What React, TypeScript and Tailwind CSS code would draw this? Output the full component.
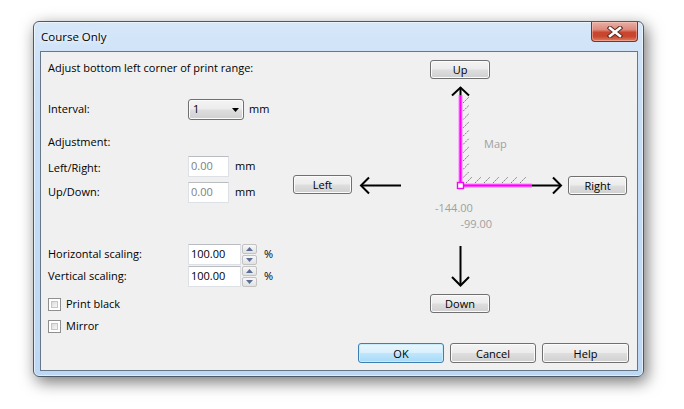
import React from "react";

const btnFace =
  "border border-[#707070] rounded-[3px] bg-[linear-gradient(to_bottom,#f4f4f4_0%,#ececec_48%,#dedede_52%,#d0d0d0_100%)] shadow-[inset_0_0_0_1px_#fbfbfb]";

function Btn({
  children,
  className = "",
  primary = false,
}: {
  children: React.ReactNode;
  className?: string;
  primary?: boolean;
}) {
  const face = primary
    ? "border border-[#3c7fb1] rounded-[3px] bg-[linear-gradient(to_bottom,#eaf6fd_0%,#d9f0fc_48%,#bee6fd_52%,#a7d9f5_100%)] shadow-[inset_0_0_0_1px_#c8ecfd]"
    : btnFace;
  return (
    <div
      className={`${face} h-[19px] flex items-center justify-center text-[11px] text-black leading-none shrink-0 ${className}`}
    >
      {children}
    </div>
  );
}

function TextBox({
  value,
  muted = false,
  className = "",
}: {
  value: string;
  muted?: boolean;
  className?: string;
}) {
  return (
    <div
      className={`h-[21px] bg-white border border-[#dde1e6] border-t-[#b9bcc1] flex items-center pl-[2px] text-[11px] shrink-0 ${
        muted ? "text-[#808080]" : "text-black"
      } ${className}`}
    >
      {value}
    </div>
  );
}

function SpinArrow({ up }: { up: boolean }) {
  return (
    <div className="h-[10px] w-[15px] rounded-[2px] border border-[#c3c3c3] bg-[linear-gradient(to_bottom,#f7f7f7,#e2e2e2)] flex items-center justify-center">
      <svg width="7" height="4" viewBox="0 0 7 4">
        {up ? (
          <path d="M0 4 L3.5 0 L7 4 Z" fill="#5b6f95" />
        ) : (
          <path d="M0 0 L3.5 4 L7 0 Z" fill="#5b6f95" />
        )}
      </svg>
    </div>
  );
}

function Spinner() {
  return (
    <div className="flex flex-col gap-[1px] ml-[1px] shrink-0">
      <SpinArrow up />
      <SpinArrow up={false} />
    </div>
  );
}

function CheckBox({ label }: { label: string }) {
  return (
    <div className="h-[15px] flex items-center gap-[5px]">
      <div className="w-[13px] h-[13px] border border-[#8f8f8f] bg-white p-[2px]">
        <div className="w-full h-full border border-[#c5c5c5] bg-[linear-gradient(135deg,#dadada,#f8f8f8)]" />
      </div>
      <span className="text-[11px] text-black">{label}</span>
    </div>
  );
}

function Dropdown() {
  return (
    <div
      className={`${btnFace} w-[56px] h-[21px] flex items-center justify-between pl-[4px] pr-[4px] text-[11px] text-black shrink-0`}
    >
      <span>1</span>
      <svg width="7" height="4" viewBox="0 0 7 4">
        <path d="M0 0 L7 0 L3.5 4 Z" fill="#000" />
      </svg>
    </div>
  );
}

function CloseButton() {
  return (
    <div className="w-[47px] h-[20px] rounded-b-[4px] border border-t-0 border-[#7a3328] bg-[linear-gradient(to_bottom,#eab0a6_0%,#dc8a7c_40%,#c9452f_55%,#c8452e_75%,#dd7e63_100%)] shadow-[inset_0_0_0_1px_rgba(255,210,200,0.45)] flex items-center justify-center self-start">
      <svg width="16" height="12" viewBox="0 0 16 12">
        <path
          d="M3 2 L13 10 M13 2 L3 10"
          stroke="#5a2a24"
          strokeWidth="4.6"
          strokeLinecap="square"
        />
        <path
          d="M3 2 L13 10 M13 2 L3 10"
          stroke="#ffffff"
          strokeWidth="2.6"
          strokeLinecap="square"
        />
      </svg>
    </div>
  );
}

// Diagram of the print range corner with the move arrows
function CornerDiagram() {
  const vHatch = [] as number[];
  for (let y = 17; y <= 98; y += 8.3) vHatch.push(y);
  const hHatch = [] as number[];
  for (let x = 110; x <= 172; x += 9) hHatch.push(x);
  return (
    <svg
      width="212"
      height="212"
      viewBox="0 0 212 212"
      className="ml-[4px] shrink-0"
      fontFamily="'Open Sans', 'Liberation Sans', sans-serif"
    >
      {/* hatch along the vertical edge */}
      {vHatch.map((y) => (
        <line
          key={`v${y}`}
          x1="107"
          y1={y + 6}
          x2="113"
          y2={y}
          stroke="#7a7a7a"
          strokeWidth="1"
          strokeDasharray="2 1"
        />
      ))}
      {/* hatch along the horizontal edge */}
      {hHatch.map((x) => (
        <line
          key={`h${x}`}
          x1={x}
          y1="103"
          x2={x + 6}
          y2="97"
          stroke="#7a7a7a"
          strokeWidth="1"
          strokeDasharray="2 1"
        />
      ))}

      {/* up arrow */}
      <line x1="104.5" y1="7.5" x2="104.5" y2="16" stroke="#000" strokeWidth="2" />
      <path d="M96 15.5 L104.5 7.5 L113 15.5" stroke="#000" strokeWidth="2" fill="none" />

      {/* magenta edges */}
      <line x1="104.5" y1="15" x2="104.5" y2="105.5" stroke="#ff80ff" strokeWidth="4" />
      <line x1="104" y1="105.5" x2="176" y2="105.5" stroke="#ff80ff" strokeWidth="4" />
      <line x1="104.5" y1="15" x2="104.5" y2="105.5" stroke="#ff00ff" strokeWidth="2" />
      <line x1="104" y1="105.5" x2="176" y2="105.5" stroke="#ff00ff" strokeWidth="2" />
      <rect x="101.5" y="102.5" width="6" height="6" fill="#fff" stroke="#ff00ff" strokeWidth="1.4" />

      {/* right arrow */}
      <line x1="176" y1="105.5" x2="205" y2="105.5" stroke="#000" strokeWidth="2" />
      <path d="M197 97.5 L205 105.5 L197 113.5" stroke="#000" strokeWidth="2" fill="none" />

      {/* left arrow */}
      <line x1="5" y1="105.5" x2="45" y2="105.5" stroke="#000" strokeWidth="2" />
      <path d="M13 97.5 L5 105.5 L13 113.5" stroke="#000" strokeWidth="2" fill="none" />

      {/* down arrow */}
      <line x1="104.5" y1="166" x2="104.5" y2="205" stroke="#000" strokeWidth="2" />
      <path d="M96 197 L104.5 205.5 L113 197" stroke="#000" strokeWidth="2" fill="none" />

      <text x="128" y="68" fontSize="11" fill="#a0a0a0">
        Map
      </text>
      <text x="79" y="132" fontSize="11" fill="#a0a0a0">
        -144.00
      </text>
      <text x="104.5" y="147.5" fontSize="11" fill="#a0a0a0">
        -99.00
      </text>
    </svg>
  );
}

export default function App() {
  return (
    <div className="w-[684px] h-[409px] bg-white pl-[33px] pt-[21px] font-['Open_Sans','Liberation_Sans',sans-serif] text-[11px] text-black overflow-hidden">
      {/* dialog window */}
      <div className="w-[611px] h-[356px] rounded-[6px] border border-[#4f5966] bg-[linear-gradient(to_bottom,#d6e7f9_0%,#c7def6_20%,#bdd8f4_100%)] shadow-[3px_5px_16px_rgba(0,0,0,0.55),inset_0_0_0_1px_rgba(255,255,255,0.55)] flex flex-col pl-[6px] pr-[5px] pb-[5px]">
        {/* title bar */}
        <div className="h-[29px] flex justify-between shrink-0">
          <div className="self-center pl-[1px] text-[11.5px] text-black [text-shadow:0_0_8px_#fff,0_0_4px_#fff]">
            Course Only
          </div>
          <CloseButton />
        </div>

        {/* client area */}
        <div className="flex-1 border border-[#66778a] bg-[#f0f0f0] flex flex-col">
          <div className="flex-1 flex">
            {/* settings column */}
            <div className="w-[252px] pl-[7px] pt-[8px] flex flex-col shrink-0">
              <div className="h-[15px] leading-[15px]">Adjust bottom left corner of print range:</div>

              <div className="mt-[24px] h-[21px] flex items-center">
                <span className="w-[140px] shrink-0">Interval:</span>
                <Dropdown />
                <span className="ml-[5px]">mm</span>
              </div>

              <div className="mt-[14px] h-[15px] leading-[15px]">Adjustment:</div>

              <div className="mt-[7px] h-[21px] flex items-center">
                <span className="w-[140px] shrink-0 pt-[3px]">Left/Right:</span>
                <TextBox value="0.00" muted className="w-[41px]" />
                <span className="ml-[6px]">mm</span>
              </div>

              <div className="mt-[5px] h-[21px] flex items-center">
                <span className="w-[140px] shrink-0">Up/Down:</span>
                <TextBox value="0.00" muted className="w-[41px]" />
                <span className="ml-[6px]">mm</span>
              </div>

              <div className="mt-[41px] h-[21px] flex items-center">
                <span className="w-[140px] shrink-0">Horizontal scaling:</span>
                <TextBox value="100.00" className="w-[53px]" />
                <Spinner />
                <span className="ml-[7px]">%</span>
              </div>

              <div className="mt-[1px] h-[21px] flex items-center">
                <span className="w-[140px] shrink-0">Vertical scaling:</span>
                <TextBox value="100.00" className="w-[53px]" />
                <Spinner />
                <span className="ml-[7px]">%</span>
              </div>

              <div className="mt-[10px]">
                <CheckBox label="Print black" />
              </div>
              <div className="mt-[7px]">
                <CheckBox label="Mirror" />
              </div>
            </div>

            {/* movement panel */}
            <div className="flex flex-col pt-[8px]">
              <Btn className="ml-[137px] w-[60px]">Up</Btn>
              <div className="flex mt-[1px]">
                <Btn className="mt-[95px] w-[59px]">Left</Btn>
                <CornerDiagram />
                <Btn className="mt-[96px] w-[59px]">Right</Btn>
              </div>
              <Btn className="ml-[137px] mt-[2px] w-[60px]">Down</Btn>
            </div>
          </div>

          {/* dialog buttons */}
          <div className="flex justify-end gap-[6px] pr-[8px] pb-[7px]">
            <Btn primary className="w-[86px] h-[20px]">
              OK
            </Btn>
            <Btn className="w-[86px] h-[20px]">Cancel</Btn>
            <Btn className="w-[87px] h-[20px]">Help</Btn>
          </div>
        </div>
      </div>
    </div>
  );
}
